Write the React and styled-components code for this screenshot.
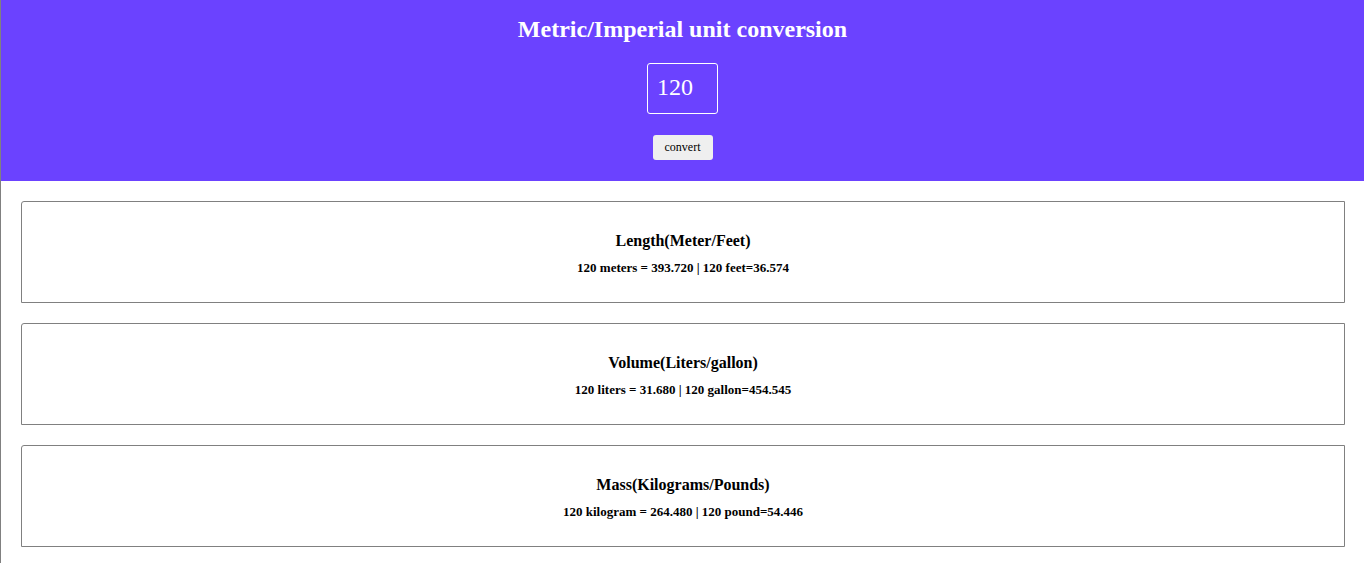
import React, { useState } from "react";
import styled, { createGlobalStyle } from "styled-components";

const GlobalStyle = createGlobalStyle`
  body {
    margin: 0;
    font-family: "Liberation Serif", "Times New Roman", serif;
    background: #ffffff;
  }
`;

const conversions = [
  {
    title: "Length(Meter/Feet)",
    text: (v) =>
      `${v} meters = ${(v * 3.281).toFixed(3)} | ${v} feet=${(v / 3.281).toFixed(3)}`,
  },
  {
    title: "Volume(Liters/gallon)",
    text: (v) =>
      `${v} liters = ${(v * 0.264).toFixed(3)} | ${v} gallon=${(v / 0.264).toFixed(3)}`,
  },
  {
    title: "Mass(Kilograms/Pounds)",
    text: (v) =>
      `${v} kilogram = ${(v * 2.204).toFixed(3)} | ${v} pound=${(v / 2.204).toFixed(3)}`,
  },
];

export default function App() {
  const [input, setInput] = useState("120");
  const [value, setValue] = useState(120);

  return (
    <>
      <GlobalStyle />
      <Page>
        <Header>
          <Title>Metric/Imperial unit conversion</Title>
          <NumberInput
            type="text"
            value={input}
            onChange={(e) => setInput(e.target.value)}
          />
          <ConvertButton onClick={() => setValue(Number(input) || 0)}>
            convert
          </ConvertButton>
        </Header>
        <Results>
          {conversions.map((c) => (
            <Card key={c.title}>
              <CardTitle>{c.title}</CardTitle>
              <CardText>{c.text(value)}</CardText>
            </Card>
          ))}
        </Results>
      </Page>
    </>
  );
}

const Page = styled.div`
  min-height: 100vh;
  border-left: 1px solid #808080;
  box-sizing: border-box;
`;

const Header = styled.header`
  height: 181px;
  box-sizing: border-box;
  background-color: #6b42ff;
  display: flex;
  flex-direction: column;
  align-items: center;
  padding-top: 15px;
`;

const Title = styled.h1`
  margin: 0;
  font-size: 24px;
  line-height: 28px;
  font-weight: bold;
  color: #ffffff;
`;

const NumberInput = styled.input`
  margin-top: 20px;
  width: 71px;
  height: 51px;
  box-sizing: border-box;
  padding: 0 9px 2px;
  background: transparent;
  border: 1px solid #ffffff;
  border-radius: 3px;
  color: #ffffff;
  font-family: "Liberation Serif", "Times New Roman", serif;
  font-size: 24px;
  outline: none;
`;

const ConvertButton = styled.button`
  margin-top: 21px;
  width: 60px;
  height: 25px;
  background: #efefef;
  border: none;
  border-radius: 3px;
  font-family: "Liberation Serif", "Times New Roman", serif;
  font-size: 12px;
  color: #000000;
  cursor: pointer;
`;

const Results = styled.main`
  display: flex;
  flex-direction: column;
  gap: 20px;
  padding: 20px 19px 20px 20px;
`;

const Card = styled.section`
  height: 102px;
  box-sizing: border-box;
  border: 1px solid #808080;
  border-top-left-radius: 3px;
  display: flex;
  flex-direction: column;
  align-items: center;
  justify-content: center;
  gap: 10px;
  padding-top: 3px;
`;

const CardTitle = styled.h3`
  margin: 0;
  font-size: 16px;
  line-height: 18px;
  font-weight: bold;
  color: #000000;
`;

const CardText = styled.p`
  margin: 0;
  font-size: 13px;
  line-height: 15px;
  font-weight: bold;
  color: #000000;
`;
